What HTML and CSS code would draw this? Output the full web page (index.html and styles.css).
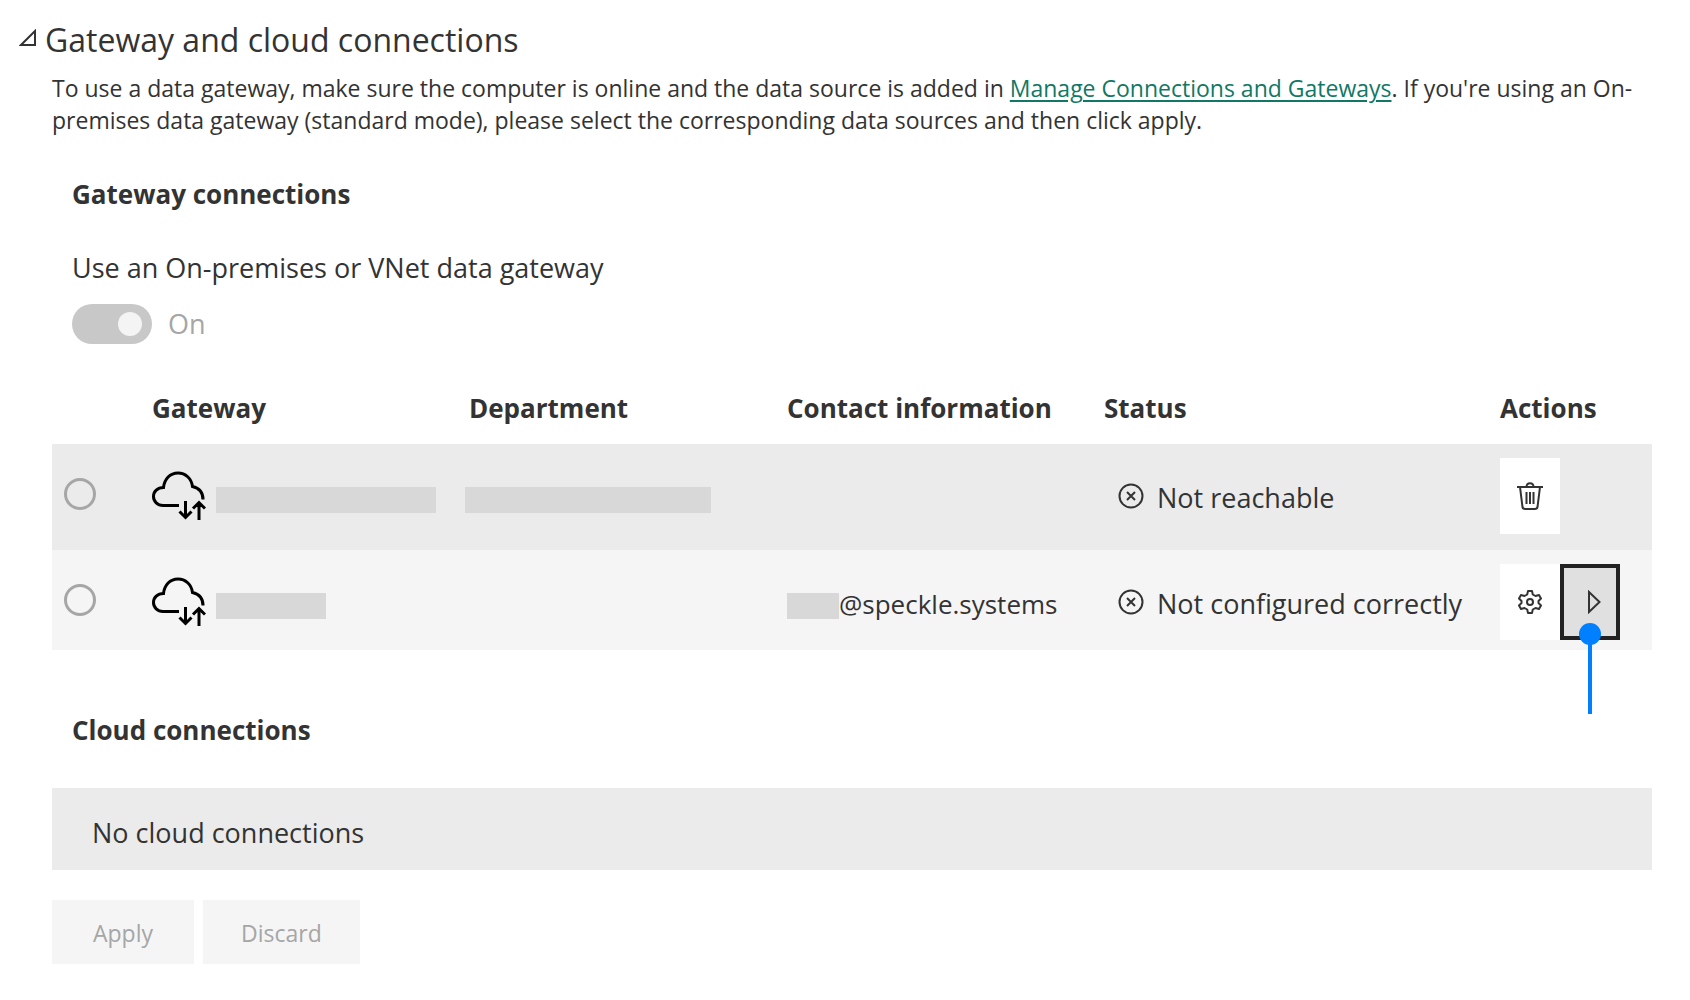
FILE: index.html
```html
<!DOCTYPE html>
<html lang="en">
<head>
<meta charset="utf-8">
<meta name="viewport" content="width=device-width, initial-scale=1">
<title>Gateway and cloud connections</title>
<link rel="stylesheet" href="styles.css">
</head>
<body>
<svg class="sprite" aria-hidden="true">
  <symbol id="cloud" viewBox="0 0 54 50">
    <path d="M27 34.500H11C5.500 34.500 1.500 30.500 1.500 25.500C1.500 20.500 5.500 16.500 11.500 16.500C12.500 8 18 2 26 2C33.500 2 39.500 7.500 40.500 15.500C47 17 51 21.500 51 28.500" fill="none" stroke="#000" stroke-width="3"/>
    <path d="M33.500 30V46M27.500 40.500L33.500 46.500L39.500 40.500M47 49V32M41 37.500L47 31.500L53 37.500" fill="none" stroke="#000" stroke-width="3"/>
  </symbol>
  <symbol id="error" viewBox="0 0 26 26">
    <circle cx="13" cy="13" r="11.500" fill="none" stroke="#333" stroke-width="2"/>
    <path d="M9 9L17 17M17 9L9 17" fill="none" stroke="#333" stroke-width="2"/>
  </symbol>
</svg>
<main class="settings">
  <h2 class="title">
    <button class="title-toggle" type="button" aria-expanded="true">
      <svg class="caret" viewBox="0 0 18 18" aria-hidden="true"><path d="M2 16H16V2Z" fill="none" stroke="#333" stroke-width="2"/></svg>
      Gateway and cloud connections
    </button>
  </h2>
  <div class="content">
    <p class="intro">To use a data gateway, make sure the computer is online and the data source is added in <a href="#">Manage Connections and Gateways</a>. If you're using an On-premises data gateway (standard mode), please select the corresponding data sources and then click apply.</p>

    <h3 class="subtitle">Gateway connections</h3>
    <label class="switch-label" for="use-gateway">Use an On-premises or VNet data gateway</label>
    <div class="switch-row">
      <input class="switch" id="use-gateway" type="checkbox" role="switch" checked disabled>
      <span>On</span>
    </div>

    <table class="gateways">
      <colgroup>
        <col class="col-select"><col class="col-gateway"><col class="col-department"><col class="col-contact"><col class="col-status"><col class="col-actions">
      </colgroup>
      <thead>
        <tr><td></td><th scope="col">Gateway</th><th scope="col">Department</th><th scope="col">Contact information</th><th scope="col">Status</th><th scope="col">Actions</th></tr>
      </thead>
      <tbody>
        <tr>
          <td class="select"><div class="cell"><input class="radio" type="radio" name="gateway" aria-label="First gateway"></div></td>
          <td><div class="cell"><svg class="cloud" aria-hidden="true"><use href="#cloud"/></svg><span class="redacted redacted-name"></span></div></td>
          <td class="department"><div class="cell"><span class="redacted redacted-department"></span></div></td>
          <td></td>
          <td><div class="cell status"><svg class="error" aria-hidden="true"><use href="#error"/></svg><span class="cell-text">Not reachable</span></div></td>
          <td><div class="cell">
            <button class="action" type="button" aria-label="Delete">
              <svg class="trash" viewBox="0 0 26 28" aria-hidden="true"><path d="M0 5H26M9.500 5C9.500 0 16.500 0 16.500 5M3 5L5.500 25Q5.800 27 8 27H18Q20.200 27 20.500 25L23 5M9.500 10V22M13 10V22M16.500 10V22" fill="none" stroke="#333" stroke-width="2"/></svg>
            </button>
          </div></td>
        </tr>
        <tr>
          <td class="select"><div class="cell"><input class="radio" type="radio" name="gateway" aria-label="Second gateway"></div></td>
          <td><div class="cell"><svg class="cloud" aria-hidden="true"><use href="#cloud"/></svg><span class="redacted redacted-short"></span></div></td>
          <td></td>
          <td><div class="cell contact"><span class="redacted redacted-user"></span><span class="cell-text">@speckle.systems</span></div></td>
          <td><div class="cell status"><svg class="error" aria-hidden="true"><use href="#error"/></svg><span class="cell-text">Not configured correctly</span></div></td>
          <td><div class="cell">
            <button class="action" type="button" aria-label="Settings">
              <svg class="gear" viewBox="0 0 24 24" aria-hidden="true"><path d="M10 1H14L14.800 4.500L17.500 6L21 5L23 8.500L20.500 11V13L23 15.500L21 19L17.500 18L14.800 19.500L14 23H10L9.200 19.500L6.500 18L3 19L1 15.500L3.500 13V11L1 8.500L3 5L6.500 6L9.200 4.500Z" fill="none" stroke="#333" stroke-width="2" stroke-linejoin="round"/><circle cx="12" cy="12" r="3" fill="none" stroke="#333" stroke-width="2"/></svg>
            </button>
            <button class="action action-focused" type="button" aria-label="Show data sources">
              <svg class="play" viewBox="0 0 14 24" aria-hidden="true"><path d="M2 2V22L12.500 12Z" fill="none" stroke="#333" stroke-width="2"/></svg>
              <span class="callout"></span>
            </button>
          </div></td>
        </tr>
      </tbody>
    </table>

    <h3 class="subtitle subtitle-cloud">Cloud connections</h3>
    <p class="empty">No cloud connections</p>
    <div class="buttons">
      <button class="button" type="button" disabled>Apply</button>
      <button class="button" type="button" disabled>Discard</button>
    </div>
  </div>
</main>
</body>
</html>
```
FILE: styles.css
```css
* { box-sizing: border-box; }

body {
  margin: 0;
  background: #fff;
  color: #333;
  font: 27px/36px "Open Sans", "Noto Sans", sans-serif;
}

button { border: 0; padding: 0; color: inherit; font: inherit; }

.sprite { position: absolute; width: 0; height: 0; }

.settings { padding: 18px 38px 36px 19px; }

.title { margin: 0; font-size: 32px; line-height: 44px; font-weight: 400; }
.title-toggle { display: flex; align-items: center; gap: 8px; background: none; }
.caret { width: 18px; height: 18px; margin-bottom: 4px; }

.content { padding-left: 33px; }

.intro { margin: 10px 0 40px; font-size: 23px; line-height: 32px; }
.intro a { color: #117865; text-decoration-thickness: 2px; text-underline-offset: 3px; }

.subtitle { margin: 0 20px; font-size: 26px; line-height: 36px; font-weight: 700; }

.switch-label { display: block; margin: 38px 20px 18px; }
.switch-row { display: flex; align-items: center; gap: 16px; margin: 0 20px; color: #a6a6a6; }
.switch {
  appearance: none;
  display: flex;
  justify-content: flex-end;
  align-items: center;
  width: 80px;
  height: 40px;
  margin: 0;
  padding: 0 10px;
  border-radius: 20px;
  background: #c8c8c8;
}
.switch::before { content: ""; width: 24px; height: 24px; border-radius: 50%; background: #f4f4f4; }

.gateways { width: 100%; margin-top: 46px; table-layout: fixed; border-collapse: collapse; }
.col-select { width: 96px; }
.col-gateway { width: 317px; }
.col-department { width: 318px; }
.col-contact { width: 317px; }
.col-status { width: 396px; }
.col-actions { width: 156px; }

.gateways th { padding: 0 0 18px 4px; font-size: 26px; font-weight: 700; text-align: left; white-space: nowrap; }
.gateways tbody td { padding: 14px 0 10px 4px; vertical-align: top; white-space: nowrap; }
.gateways tbody tr { background: #f5f5f5; }
.gateways tbody tr:first-child { height: 106px; background: #ebebeb; }
.gateways tbody .select { padding-left: 12px; }
.gateways tbody .department { padding-left: 0; }

.cell { display: flex; align-items: center; height: 76px; }
.cell-text { padding-top: 4px; }
.radio { appearance: none; width: 32px; height: 32px; margin: 0 0 4px; border: 3px solid #a6a6a6; border-radius: 50%; }
.cloud { width: 54px; height: 50px; margin-right: 10px; }
.redacted { height: 26px; margin-top: 8px; background: #d8d8d8; }
.redacted-name { width: 220px; }
.redacted-short { width: 110px; }
.redacted-department { width: 246px; }
.redacted-user { width: 52px; }

.contact { font-size: 26px; }
.status { gap: 13px; padding-left: 14px; }
.error { width: 26px; height: 26px; }

.action {
  position: relative;
  display: flex;
  justify-content: center;
  align-items: center;
  width: 60px;
  height: 76px;
  background: #fff;
}
.action-focused { border: 4px solid #222; padding-left: 8px; background: #e0e0e0; }
.trash { width: 26px; height: 28px; }
.gear { width: 24px; height: 24px; }
.play { width: 14px; height: 24px; }

/* Pointer that hangs from the focused action */
.callout { position: absolute; top: 66px; left: 50%; width: 4px; height: 80px; margin-left: -2px; background: #007fff; }
.callout::before { content: ""; position: absolute; top: -11px; left: -9px; width: 22px; height: 22px; border-radius: 50%; background: #007fff; }

.subtitle-cloud { margin: 62px 20px 40px; }
.empty { margin: 0; padding: 27px 40px 19px; background: #ebebeb; }

.buttons { display: flex; gap: 9px; margin-top: 30px; }
.button { min-width: 142px; height: 64px; padding: 2px 38px 0; background: #f5f5f5; color: #a6a6a6; font-size: 23px; }
```
